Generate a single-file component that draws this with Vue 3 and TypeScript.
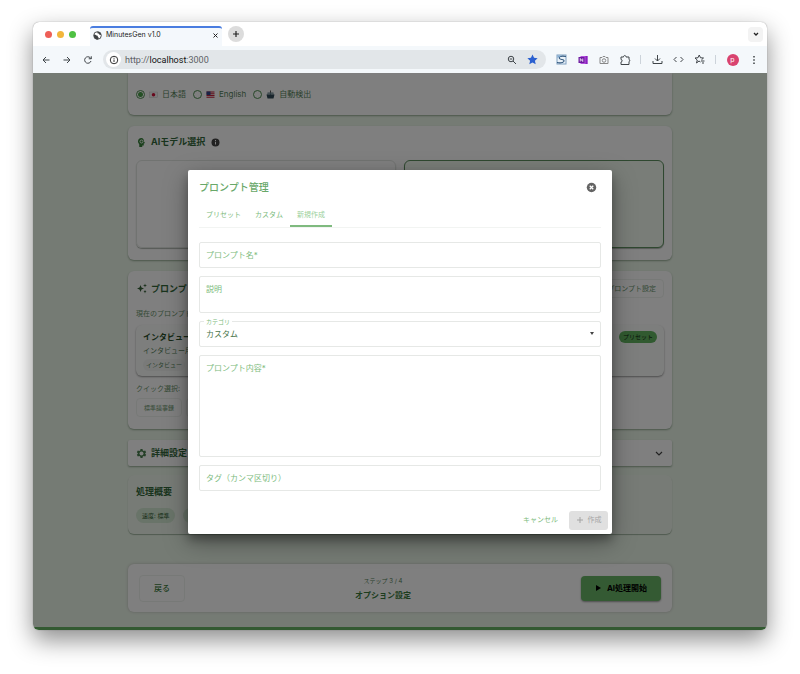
<script setup lang="ts">
import { ref } from 'vue'

interface Language {
  id: string
  label: string
}

const languages: Language[] = [
  { id: 'ja', label: '日本語' },
  { id: 'en', label: 'English' },
  { id: 'auto', label: '自動検出' },
]
const language = ref<string>('ja')

const tabs: string[] = ['プリセット', 'カスタム', '新規作成']
const activeTab = ref<string>('新規作成')

const promptName = ref<string>('')
const description = ref<string>('')
const category = ref<string>('カスタム')
const content = ref<string>('')
const tags = ref<string>('')
</script>

<template>
  <div class="desktop">
    <div class="window">
      <header class="strip">
        <div class="lights"><i class="red"></i><i class="amber"></i><i class="green"></i></div>
        <div class="browser-tab">
          <svg width="9" height="9" viewBox="0 0 18 18">
            <circle cx="9" cy="9" r="7.6" fill="#fff" stroke="#3c4043" stroke-width="1.8" />
            <path d="M2 7c3-1 4 2 6 2s1 3 3 4-1 4-2 4C4 17 1 12 2 7zM9 1.5C8 4 9 5 11 5s1 3 3 3 2-1 2.500 0C16 4 13 1 9 1.500z" fill="#3c4043" />
          </svg>
          <span>MinutesGen v1.0</span>
          <button class="bare" aria-label="タブを閉じる">
            <svg width="7" height="7" viewBox="0 0 14 14"><path d="M3 3l8 8M11 3l-8 8" stroke="#222" stroke-width="2" /></svg>
          </button>
        </div>
        <button class="new-tab" aria-label="新しいタブ">
          <svg width="10" height="10" viewBox="0 0 10 10"><path d="M5 2v6M2 5h6" stroke="#222" stroke-width="1.200" /></svg>
        </button>
        <button class="tab-list" aria-label="タブを検索">
          <svg width="8" height="8" viewBox="0 0 8 8"><path d="M2 3l2 2 2-2" fill="none" stroke="#222" stroke-width="1.300" /></svg>
        </button>
      </header>

      <div class="toolbar">
        <button class="tool" aria-label="戻る">
          <svg width="10" height="10" viewBox="0 0 20 20"><path d="M17 10H4M10 4l-6 6 6 6" /></svg>
        </button>
        <button class="tool" aria-label="進む">
          <svg width="10" height="10" viewBox="0 0 20 20"><path d="M3 10h13M10 4l6 6-6 6" /></svg>
        </button>
        <button class="tool" aria-label="再読み込み">
          <svg width="10" height="10" viewBox="0 0 20 20"><path d="M16 12a6.500 6.500 0 1 1-1.500-6.500L16.500 7.500M16.500 2.500v5h-5" /></svg>
        </button>
        <div class="omnibox">
          <span class="site-info">
            <svg width="10" height="10" viewBox="0 0 20 20"><circle cx="10" cy="10" r="7.500" fill="none" stroke="#333" stroke-width="2" /><path d="M10 9v5M10 5.500v2" stroke="#333" stroke-width="2" /></svg>
          </span>
          <span class="url">http://<b>localhost</b>:3000</span>
          <button class="tool" aria-label="ズーム">
            <svg width="10" height="10" viewBox="0 0 20 20"><circle cx="8" cy="8" r="5.500" /><path d="M12 12l6 6M5.500 8h5" /></svg>
          </button>
          <button class="tool" aria-label="ブックマーク">
            <svg width="11" height="11" viewBox="0 0 20 20"><path class="star" d="M10 1l2.800 6 6.500.7-4.900 4.400 1.400 6.500L10 15.300l-5.800 3.300 1.400-6.500L.7 7.700l6.500-.7z" /></svg>
          </button>
        </div>
        <button class="tool" aria-label="拡張機能 S">
          <svg width="11" height="11" viewBox="0 0 22 22"><rect x="2" y="2" width="18" height="18" style="stroke: #7f9fc0; fill: #eaf2f8" /><path d="M20 5C9 3 5 6 7 9s8 1 9 4-5 6-14 4" style="stroke: #31577d; stroke-width: 2.200" /><path d="M3 3h9L3 8z" style="stroke: none; fill: #7fa9d0" /></svg>
        </button>
        <button class="tool" aria-label="OneNote">
          <svg width="10" height="10" viewBox="0 0 20 20"><rect x="5" y="2" width="14" height="16" style="stroke: none; fill: #b452dd" /><path d="M15 2h4v16h-4z" style="stroke: none; fill: #8a24bd" /><rect x="1" y="4" width="12" height="12" style="stroke: none; fill: #6d18a0" /><path d="M4.500 13V7l5 6V7" style="stroke: #fff; stroke-width: 1.600" /></svg>
        </button>
        <button class="tool" aria-label="スクリーンショット">
          <svg class="muted" width="10" height="10" viewBox="0 0 20 20"><path d="M2 5h4l2-2h4l2 2h4v12H2z" /><circle cx="10" cy="11" r="3.500" /></svg>
        </button>
        <button class="tool" aria-label="拡張機能">
          <svg width="12" height="12" viewBox="0 0 24 24"><path d="M4 6h5c0-4 5-4 5 0h6v5c2 0 2 4 0 4v6H4v-5c3 0 3-5 0-5z" /></svg>
        </button>
        <i class="sep"></i>
        <button class="tool" aria-label="ダウンロード">
          <svg width="11" height="11" viewBox="0 0 22 22"><path d="M11 2v12M6 9l5 5 5-5M2 14v5h18v-5" /></svg>
        </button>
        <button class="tool" aria-label="デベロッパー ツール">
          <svg width="11" height="11" viewBox="0 0 22 22"><path d="M7 6l-5 5 5 5M15 6l5 5-5 5" /></svg>
        </button>
        <button class="tool" aria-label="お気に入り">
          <svg width="11" height="11" viewBox="0 0 22 22"><path d="M13 16l-3-2-5 4 1.500-6L2 8l6-.5L10.500 2 13 7.500l6 .5-4 3.500M14 14h7M16 18h4" /></svg>
        </button>
        <i class="sep"></i>
        <button class="tool" aria-label="プロフィール"><span class="avatar">p</span></button>
        <button class="tool" aria-label="メニュー">
          <svg width="10" height="10" viewBox="0 0 20 20"><path d="M8.500 2h3v3h-3zM8.500 8.500h3v3h-3zM8.500 15h3v3h-3z" style="stroke: none; fill: #3c4043" /></svg>
        </button>
      </div>

      <main class="viewport">
        <div class="page">
          <section class="card languages">
            <label v-for="item in languages" :key="item.id">
              <input v-model="language" type="radio" name="language" :value="item.id" />
              <svg v-if="item.id === 'ja'" width="9" height="9" viewBox="0 0 18 18"><rect x="1" y="4" width="16" height="11" fill="#f4f4f4" stroke="#c9c9c9" /><circle cx="9" cy="9.500" r="3.500" fill="#d0103a" /></svg>
              <svg v-else-if="item.id === 'en'" width="9" height="9" viewBox="0 0 18 18"><rect x="1" y="3" width="16" height="12" fill="#eee" /><path d="M1 4h16M1 7.500h16M1 11h16M1 14.500h16" stroke="#c8203c" stroke-width="2" /><rect x="1" y="3" width="8" height="7" fill="#35478c" /></svg>
              <svg v-else width="9" height="9" viewBox="0 0 18 18"><path d="M9 1v5" stroke="#555" stroke-width="2" /><path d="M3 5h12v5H3z" fill="#65808c" /><path d="M1 9h16l-2 8H3z" fill="#304a58" /><path d="M5 7h2v2H5zM11 7h2v2h-2z" fill="#fff" /></svg>
              {{ item.label }}
            </label>
          </section>

          <section class="card models">
            <h2>
              <svg width="11" height="11" viewBox="0 0 22 22"><path d="M11 2a7 7 0 0 0-7 7c0 3 2 4 2.500 6v5h6v-3h3v-4l2.500-1-2-3c0-4-2-7-5-7z" fill="#37803a" /><circle cx="11" cy="9" r="3" fill="none" stroke="#fff" stroke-width="1.800" /></svg>
              AIモデル選択
              <svg class="info" width="9" height="9" viewBox="0 0 18 18"><circle cx="9" cy="9" r="8" fill="#444" /><path d="M9 8v5M9 4v2.500" stroke="#fff" stroke-width="2" /></svg>
            </h2>
            <div class="model-grid">
              <div class="model"></div>
              <div class="model selected"></div>
            </div>
          </section>

          <section class="card prompt">
            <div class="head">
              <h2>
                <svg width="11" height="11" viewBox="0 0 22 22"><path d="M9 4l2 5 5 2-5 2-2 5-2-5-5-2 5-2zM18 1l1 3 3 1-3 1-1 3-1-3-3-1 3-1zM18 14l1 2 2 1-2 1-1 3-1-3-2-1 2-1z" fill="#345f36" /></svg>
                プロンプト
              </h2>
              <button class="outline">プロンプト設定</button>
            </div>
            <p class="caption">現在のプロンプト</p>
            <div class="current">
              <div class="current-title"><b>インタビュー</b><span class="badge">プリセット</span></div>
              <p>インタビュー用</p>
              <span class="tag">インタビュー</span>
            </div>
            <p class="caption quick-label">クイック選択:</p>
            <div class="quick"><button class="outline">標準議事録</button><button class="outline">詳細</button></div>
          </section>

          <button class="card accordion">
            <svg width="11" height="11" viewBox="0 0 22 22"><path d="M9 2h4l.6 2.800 2 1.100L18.300 5l2 3.500-2 2v1l2 2-2 3.500-2.700-.9-2 1.100L13 20H9l-.6-2.800-2-1.100-2.700.9-2-3.500 2-2v-1l-2-2 2-3.500 2.700.9 2-1.100z" fill="#4b8050" /><circle cx="11" cy="11" r="4" fill="#fff" /></svg>
            <span>詳細設定</span>
            <svg class="end" width="10" height="10" viewBox="0 0 10 10"><path d="M2 4l3 3 3-3" fill="none" stroke="#444" stroke-width="1.200" /></svg>
          </button>

          <section class="card summary">
            <h2>処理概要</h2>
            <div class="chips"><span>速度: 標準</span><span>言語: 日本語</span></div>
          </section>

          <nav class="card steps">
            <button class="outline back">戻る</button>
            <div class="step"><small>ステップ 3 / 4</small><b>オプション設定</b></div>
            <button class="start">
              <svg width="7" height="8" viewBox="0 0 7 8"><path d="M1 1l5 3-5 3z" fill="#000" /></svg>
              AI処理開始
            </button>
          </nav>
        </div>
        <div class="footer-bar"></div>

        <div class="backdrop">
          <form class="dialog" role="dialog" aria-labelledby="dialog-title" @submit.prevent>
            <div class="dialog-head">
              <h1 id="dialog-title">プロンプト管理</h1>
              <button type="button" class="bare" aria-label="閉じる">
                <svg width="11" height="11" viewBox="0 0 22 22"><circle cx="11" cy="11" r="9.500" fill="#646464" /><path d="M7.500 7.500l7 7M14.500 7.500l-7 7" stroke="#fff" stroke-width="2.600" /></svg>
              </button>
            </div>
            <div class="tabs" role="tablist">
              <button
                v-for="tab in tabs"
                :key="tab"
                type="button"
                role="tab"
                :aria-selected="tab === activeTab"
                :class="{ active: tab === activeTab }"
                @click="activeTab = tab"
              >{{ tab }}</button>
            </div>
            <div class="fields">
              <div class="field">
                <label for="prompt-name">プロンプト名*</label>
                <input id="prompt-name" v-model="promptName" type="text" />
              </div>
              <div class="field">
                <label for="prompt-desc">説明</label>
                <textarea id="prompt-desc" v-model="description" class="short"></textarea>
              </div>
              <div class="field select">
                <label for="prompt-category">カテゴリ</label>
                <select id="prompt-category" v-model="category"><option>カスタム</option></select>
                <svg width="4" height="3" viewBox="0 0 4 3"><path d="M0 0h4L2 3z" fill="#444" /></svg>
              </div>
              <div class="field">
                <label for="prompt-content">プロンプト内容*</label>
                <textarea id="prompt-content" v-model="content" class="tall"></textarea>
              </div>
              <div class="field">
                <label for="prompt-tags">タグ（カンマ区切り）</label>
                <input id="prompt-tags" v-model="tags" type="text" />
              </div>
            </div>
            <div class="actions">
              <button type="button" class="cancel">キャンセル</button>
              <button type="submit" class="create" disabled>
                <svg width="8" height="8" viewBox="0 0 8 8"><path d="M4 1v6M1 4h6" stroke="#a4a4a4" /></svg>
                作成
              </button>
            </div>
          </form>
        </div>
      </main>
    </div>
  </div>
</template>

<style>
body {
  background: #fff;
}
</style>

<style scoped>
* {
  box-sizing: border-box;
}
.desktop {
  display: flex;
  min-height: 100vh;
  padding: 22px 33px 44px;
  font-family: Inter, "Noto Sans CJK JP", sans-serif;
  font-size: 8px;
  line-height: 12px;
}
.window {
  flex: 1;
  display: flex;
  flex-direction: column;
  overflow: hidden;
  border-radius: 6px;
  background: #fff;
  box-shadow: 0 0 1px rgba(0, 0, 0, 0.5), 0 10px 24px rgba(0, 0, 0, 0.45);
}
svg {
  display: block;
  flex: none;
}
h1, h2, p {
  margin: 0;
}
button {
  display: flex;
  align-items: center;
  justify-content: center;
  padding: 0;
  border: 0;
  background: none;
  font: inherit;
  color: inherit;
  white-space: nowrap;
}

/* browser chrome */
.strip {
  display: flex;
  align-items: center;
  height: 24px;
  padding: 0 4px 0 12px;
}
.lights {
  display: flex;
  gap: 5px;
  width: 45px;
}
.lights i {
  width: 7px;
  height: 7px;
  border-radius: 50%;
}
.red { background: #ee5f57; }
.amber { background: #f2b63c; }
.green { background: #4fc143; }
.browser-tab {
  display: flex;
  align-items: center;
  gap: 4px;
  align-self: flex-end;
  width: 132px;
  height: 20px;
  padding: 0 3px 4px;
  border-top: 2px solid #4a7de0;
  border-radius: 3px 3px 0 0;
  background: #f4f8fc;
  font-size: 7px;
  color: #222;
}
.browser-tab span {
  flex: 1;
}
.new-tab {
  width: 16px;
  height: 16px;
  margin-left: 6px;
  border-radius: 50%;
  background: #dcdcdc;
}
.tab-list {
  width: 15px;
  height: 15px;
  margin-left: auto;
  border-radius: 4px;
  background: #f3f3f3;
}
.toolbar {
  display: flex;
  align-items: center;
  height: 27px;
  padding: 0 3px 0 2px;
  background: #f4f8fb;
}
.tool {
  width: 21px;
  height: 20px;
}
.tool svg {
  fill: none;
  stroke: #3f4448;
  stroke-width: 2;
}
.tool .muted {
  stroke: #888;
}
.tool .star {
  fill: #2b60d0;
  stroke: none;
}
.omnibox {
  flex: 1;
  display: flex;
  align-items: center;
  height: 19px;
  margin: 0 5px;
  padding: 0 3px;
  border-radius: 10px;
  background: #e2e6e9;
}
.site-info {
  display: grid;
  place-items: center;
  width: 15px;
  height: 15px;
  border-radius: 50%;
  background: #fff;
}
.url {
  flex: 1;
  padding-left: 4px;
  font-family: Roboto, sans-serif;
  font-size: 9px;
  color: #5d6165;
}
.url b {
  font-weight: 400;
  color: #111;
}
.sep {
  width: 1px;
  height: 9px;
  margin: 0 6px 0 5px;
  background: #ccd3da;
}
.avatar {
  width: 12px;
  height: 12px;
  border-radius: 50%;
  background: #d9436f;
  color: #fff;
  font-size: 7px;
  line-height: 12px;
}

/* application page */
.viewport {
  position: relative;
  flex: 1;
  display: flex;
  flex-direction: column;
  overflow: hidden;
  background: #ebf6e9;
  color: #55825a;
}
.page {
  flex: 1;
  display: flex;
  flex-direction: column;
  gap: 11px;
  width: 100%;
  max-width: 544px;
  margin: 0 auto;
}
.footer-bar {
  height: 3px;
  background: #67b464;
}
.card {
  padding: 8px;
  border-radius: 6px;
  background: #fff;
  box-shadow: 0 1px 2px rgba(20, 60, 20, 0.4);
}
h2 {
  display: flex;
  align-items: center;
  gap: 4px;
  font-size: 9px;
  line-height: 16px;
  font-weight: 700;
  color: #33683a;
}
.info {
  margin-left: 2px;
}
.languages {
  display: flex;
  align-items: center;
  gap: 7px;
  height: 42px;
  border-radius: 0 0 6px 6px;
}
.languages label {
  display: flex;
  align-items: center;
  gap: 4px;
}
.languages input {
  appearance: none;
  width: 9px;
  height: 9px;
  margin: 0;
  border: 1px solid #4f8f50;
  border-radius: 50%;
}
.languages input:checked {
  background: radial-gradient(circle, #4ba04b 2px, transparent 3px);
}
.models {
  padding-bottom: 12px;
}
.model-grid {
  display: grid;
  grid-template-columns: 1fr 1fr;
  gap: 8px;
  margin-top: 10px;
}
.model {
  height: 88px;
  border: 1px solid #e3e6e3;
  border-radius: 6px;
  box-shadow: 0 1px 1px rgba(20, 40, 20, 0.35);
}
.model.selected {
  border-color: #5e9160;
  background: #f2faf1;
}
.head {
  display: flex;
  justify-content: space-between;
}
.outline {
  height: 19px;
  padding: 0 7px;
  border: 1px solid #eef2ee;
  border-radius: 4px;
  font-size: 7px;
  color: #6a946c;
}
.caption {
  font-size: 7px;
  color: #6b956c;
}
.prompt .caption {
  margin-top: 10px;
}
.current {
  display: grid;
  gap: 2px;
  justify-items: start;
  margin-top: 5px;
  padding: 6px 7px 5px;
  border-radius: 6px;
  background: #fbfcfb;
  box-shadow: 0 1px 2px rgba(0, 0, 0, 0.4);
  font-size: 7px;
}
.current-title {
  display: flex;
  justify-content: space-between;
  width: 100%;
  font-size: 8px;
  color: #2a512c;
}
.badge {
  padding: 0 4px;
  border-radius: 6px;
  background: #62b460;
  font-size: 6px;
  color: #102a10;
}
.tag {
  padding: 0 3px;
  border-radius: 6px;
  background: #f2f5f2;
  font-size: 6px;
}
.prompt .quick-label {
  margin-top: 7px;
}
.quick {
  display: flex;
  gap: 4px;
  margin: 3px 0 4px;
}
.quick .outline {
  font-size: 6px;
}
.accordion {
  justify-content: flex-start;
  gap: 4px;
  height: 26px;
  margin-bottom: -2px;
  border-radius: 2px;
  font-size: 9px;
  font-weight: 700;
  color: #33683a;
}
.end {
  margin-left: auto;
}
.summary {
  padding: 9px 8px 11px;
  background: #eef6ec;
  box-shadow: 0 1px 1px rgba(20, 60, 20, 0.35);
}
.chips {
  display: flex;
  gap: 8px;
  margin-top: 8px;
}
.chips span {
  padding: 1px 6px;
  border-radius: 8px;
  background: #d3e8d2;
  font-size: 6px;
  line-height: 13px;
  color: #315e33;
}
.steps {
  display: flex;
  align-items: center;
  justify-content: space-between;
  height: 48px;
  margin-top: 19px;
  padding: 0 11px;
  box-shadow: 0 0 3px rgba(90, 70, 80, 0.3);
}
.back {
  width: 46px;
  height: 27px;
  font-size: 8px;
  font-weight: 500;
  color: #39793b;
}
.step {
  display: grid;
  justify-items: center;
  gap: 2px;
}
.step small {
  font-size: 6px;
}
.step b {
  color: #3a7a3d;
}
.start {
  gap: 5px;
  width: 80px;
  height: 25px;
  border-radius: 4px;
  background: #68b566;
  font-weight: 700;
  color: #000;
  box-shadow: 0 1px 2px rgba(0, 0, 0, 0.4);
}

/* prompt dialog */
.backdrop {
  position: absolute;
  inset: 0;
  display: grid;
  place-items: center;
  background: rgba(0, 0, 0, 0.5);
}
.dialog {
  width: 78%;
  max-width: 424px;
  border-radius: 2px;
  background: #fff;
  color: #7dbb7d;
  box-shadow: 0 6px 8px rgba(0, 0, 0, 0.25), 0 8px 24px rgba(0, 0, 0, 0.35);
}
.dialog-head {
  display: flex;
  align-items: center;
  justify-content: space-between;
  height: 35px;
  padding: 0 15px 0 11px;
}
h1 {
  font-size: 10px;
  font-weight: 500;
  color: #69a869;
}
.tabs {
  display: flex;
  height: 23px;
  margin: 0 11px;
  border-bottom: 1px solid #f2f4f2;
}
.tabs button {
  padding: 0 7px;
  border-bottom: 2px solid transparent;
  font-size: 7px;
}
.tabs .active {
  border-bottom-color: #7fba7f;
  color: #9bd09b;
}
.fields {
  display: grid;
  gap: 8px;
  padding: 14px 11px 20px;
}
.field {
  display: grid;
  border: 1px solid #e6e8e6;
  border-radius: 2px;
}
.field > * {
  grid-area: 1 / 1;
}
.field label {
  z-index: 1;
  align-self: start;
  justify-self: start;
  padding: 6px;
  pointer-events: none;
}
.field input,
.field textarea,
.field select {
  appearance: none;
  width: 100%;
  height: 24px;
  margin: 0;
  padding: 6px;
  border: 0;
  outline: 0;
  background: none;
  font: inherit;
  color: #487449;
  resize: none;
}
.field .short {
  height: 35px;
}
.field .tall {
  height: 100px;
}
.field svg {
  align-self: center;
  justify-self: end;
  margin-right: 6px;
  pointer-events: none;
}
.select {
  position: relative;
}
.select label {
  position: absolute;
  top: -5px;
  left: 4px;
  padding: 0 2px;
  background: #fff;
  font-size: 6px;
  line-height: 9px;
}
.actions {
  display: flex;
  justify-content: flex-end;
  gap: 4px;
  padding: 0 4px 4px;
}
.actions button {
  height: 19px;
  border-radius: 3px;
  font-size: 7px;
}
.cancel {
  padding: 0 7px;
}
.actions .create {
  gap: 4px;
  width: 39px;
  background: #e0e0e0;
  color: #a6a6a6;
}
</style>
